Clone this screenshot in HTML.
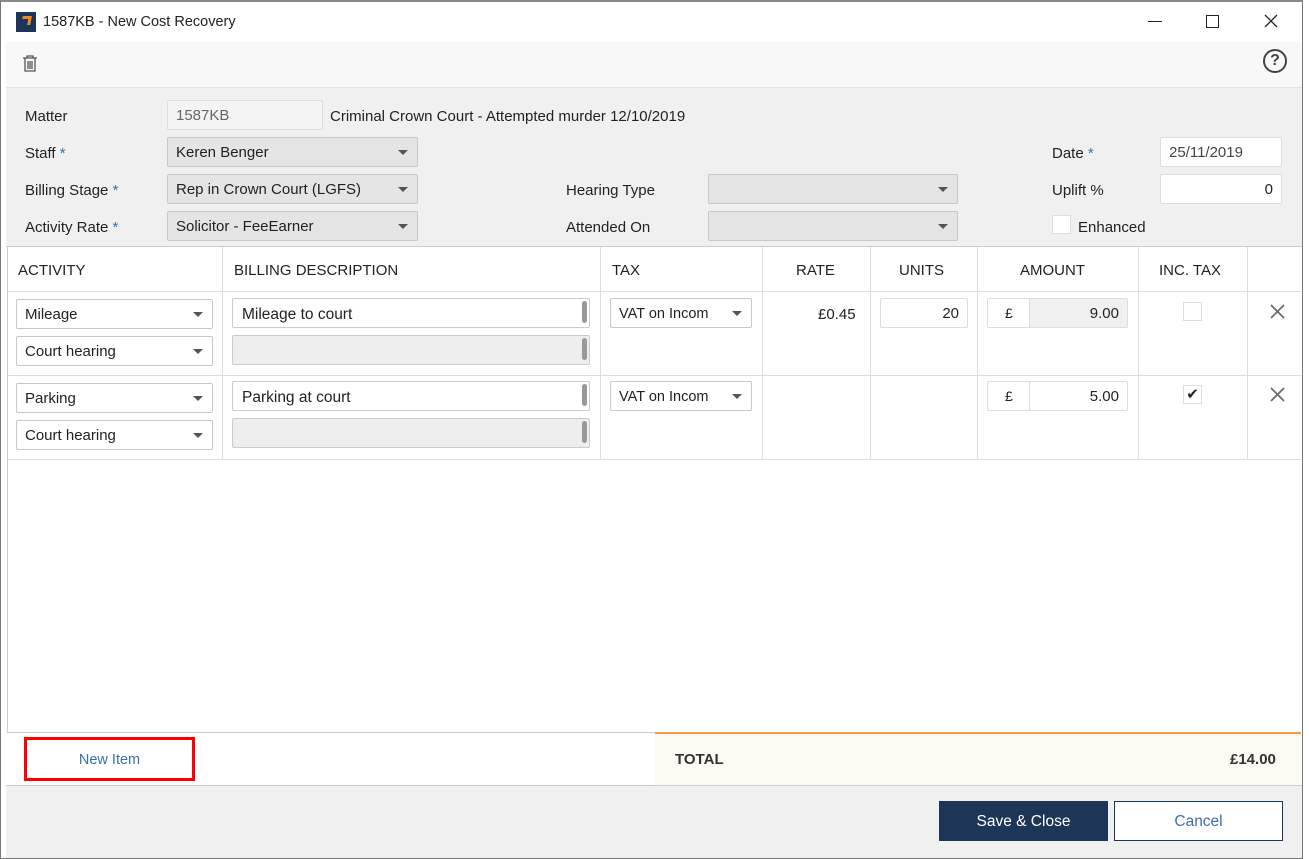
<!DOCTYPE html><html><head><style>
*{box-sizing:border-box;margin:0;padding:0}
body{width:1309px;height:859px;position:relative;background:#fff;font-family:"Liberation Sans",sans-serif;color:#222;overflow:hidden;font-size:15px}
.a{position:absolute}
.lbl{position:absolute;font-size:15px;color:#222}
.lbl b{color:#3a6fb0;font-weight:normal}
.sel{position:absolute;background:#e4e4e4;border:1px solid #c8c8c8;border-radius:2px;font-size:15px;padding:0 8px;line-height:30px;height:30px}
.sel:after{content:"";position:absolute;right:9px;top:12px;border:5px solid transparent;border-top:5px solid #555;border-bottom:0}
.wsel{background:#fff}
.inp{position:absolute;background:#fff;border:1px solid #ddd;border-radius:2px;height:30px;line-height:30px;font-size:15px;padding:0 8px}
.ta{position:absolute;border:1px solid #ccc;border-radius:2px;background:#fff;height:30px;line-height:32px;padding:0 9px;font-size:15.5px}
.ta:after{content:"";position:absolute;right:2px;top:2px;width:5px;height:22px;background:#999;border-radius:3px}
.vl{position:absolute;top:247px;height:212px;width:1px;background:#ddd}
.hd{position:absolute;top:262px;font-size:15px;color:#222}
</style></head><body>
<div class="a" style="left:0;top:0;width:1303px;height:859px;border:1px solid #777;border-top:2px solid #888;background:#fff"></div>
<div class="a" style="left:16px;top:12px;width:20px;height:20px;background:#1d3557"></div>
<div class="a" style="left:22px;top:16px;width:9px;height:9px;border-top:3px solid #f08a24;border-right:3px solid #f08a24;transform:skewX(-10deg)"></div>
<div class="a" style="left:43px;top:14px;font-size:14.5px">1587KB - New Cost Recovery</div>
<div class="a" style="left:1148px;top:21px;width:14px;height:1px;background:#222"></div>
<div class="a" style="left:1206px;top:15px;width:13px;height:13px;border:1.3px solid #222"></div>
<svg class="a" style="left:1264px;top:14px" width="14" height="14" viewBox="0 0 14 14" stroke="#222" stroke-width="1.3"><path d="M1 1L13 13M13 1L1 13"/></svg>
<div class="a" style="left:6px;top:42px;width:1296px;height:46px;background:#f8f8f8;border-bottom:1px solid #e2e2e2"></div>
<svg class="a" style="left:22px;top:54px" width="16" height="18" viewBox="0 0 16 18" fill="none" stroke="#555" stroke-width="1.3"><path d="M1 4h14M5 4V2h6v2M3 4v13h10V4M6 7v8M8 7v8M10 7v8"/></svg>
<div class="a" style="left:1263px;top:49px;width:24px;height:24px;border:2px solid #444;border-radius:50%;text-align:center;font-size:16px;line-height:20px;font-weight:bold;color:#444">?</div>
<div class="a" style="left:6px;top:88px;width:1296px;height:159px;background:#f0f0f0"></div>
<div class="lbl" style="left:25px;top:108px">Matter</div>
<div class="lbl" style="left:25px;top:145px">Staff <b>*</b></div>
<div class="lbl" style="left:25px;top:182px">Billing Stage <b>*</b></div>
<div class="lbl" style="left:25px;top:219px">Activity Rate <b>*</b></div>
<div class="inp" style="left:167px;top:100px;width:156px;background:#f4f4f4;color:#666;border-color:#ddd">1587KB</div>
<div class="lbl" style="left:330px;top:108px">Criminal Crown Court - Attempted murder 12/10/2019</div>
<div class="sel" style="left:167px;top:137px;width:251px">Keren Benger</div>
<div class="sel" style="left:167px;top:174px;width:251px">Rep in Crown Court (LGFS)</div>
<div class="sel" style="left:167px;top:211px;width:251px">Solicitor - FeeEarner</div>
<div class="lbl" style="left:566px;top:182px">Hearing Type</div>
<div class="lbl" style="left:566px;top:219px">Attended On</div>
<div class="sel" style="left:708px;top:174px;width:250px"></div>
<div class="sel" style="left:708px;top:211px;width:250px"></div>
<div class="lbl" style="left:1052px;top:145px">Date <b>*</b></div>
<div class="lbl" style="left:1052px;top:182px">Uplift %</div>
<div class="lbl" style="left:1078px;top:219px">Enhanced</div>
<div class="a" style="left:1052px;top:215px;width:19px;height:19px;background:#fff;border:1px solid #ddd"></div>
<div class="inp" style="left:1160px;top:137px;width:122px;color:#444">25/11/2019</div>
<div class="inp" style="left:1160px;top:174px;width:122px;text-align:right">0</div>
<div class="a" style="left:6px;top:246px;width:1296px;height:1px;background:#ccc"></div>
<div class="a" style="left:7px;top:291px;width:1294px;height:1px;background:#ddd"></div>
<div class="a" style="left:7px;top:375px;width:1294px;height:1px;background:#ddd"></div>
<div class="a" style="left:7px;top:459px;width:1294px;height:1px;background:#ddd"></div>
<div class="vl" style="left:222px"></div><div class="vl" style="left:600px"></div><div class="vl" style="left:762px"></div><div class="vl" style="left:870px"></div><div class="vl" style="left:977px"></div><div class="vl" style="left:1138px"></div><div class="vl" style="left:1247px"></div>
<div class="a" style="left:7px;top:247px;width:1px;height:486px;background:#ccc"></div>
<div class="hd" style="left:18px">ACTIVITY</div>
<div class="hd" style="left:234px">BILLING DESCRIPTION</div>
<div class="hd" style="left:612px">TAX</div>
<div class="hd" style="left:796px">RATE</div>
<div class="hd" style="left:899px">UNITS</div>
<div class="hd" style="left:1020px">AMOUNT</div>
<div class="hd" style="left:1159px">INC. TAX</div>
<div class="sel wsel" style="left:16px;top:299px;width:197px">Mileage</div>
<div class="sel wsel" style="left:16px;top:336px;width:197px">Court hearing</div>
<div class="sel wsel" style="left:16px;top:383px;width:197px">Parking</div>
<div class="sel wsel" style="left:16px;top:420px;width:197px">Court hearing</div>
<div class="ta" style="left:232px;top:298px;width:358px">Mileage to court</div>
<div class="ta" style="left:232px;top:335px;width:358px;background:#eee"></div>
<div class="ta" style="left:232px;top:381px;width:358px">Parking at court</div>
<div class="ta" style="left:232px;top:418px;width:358px;background:#eee"></div>
<div class="sel wsel" style="left:610px;top:298px;width:142px;font-size:14.5px">VAT on Incom</div>
<div class="sel wsel" style="left:610px;top:381px;width:142px;font-size:14.5px">VAT on Incom</div>
<div class="lbl" style="left:818px;top:306px">£0.45</div>
<div class="inp" style="left:880px;top:298px;width:88px;text-align:right">20</div>
<div class="inp" style="left:987px;top:298px;width:141px;background:#f0f0f0;text-align:right">9.00</div>
<div class="a" style="left:988px;top:299px;width:42px;height:28px;background:#fff;border-right:1px solid #ddd;padding:6px 0 0 17px;font-size:14px">£</div>
<div class="inp" style="left:987px;top:381px;width:141px;text-align:right">5.00</div>
<div class="a" style="left:988px;top:382px;width:42px;height:28px;background:#fff;border-right:1px solid #ddd;padding:6px 0 0 17px;font-size:14px">£</div>
<div class="a" style="left:1183px;top:302px;width:19px;height:19px;border:1px solid #ddd;background:#fff"></div>
<div class="a" style="left:1183px;top:385px;width:19px;height:19px;border:1px solid #ddd;background:#fff;font-size:15px;line-height:17px;text-align:center">✔</div>
<svg class="a" style="left:1270px;top:304px" width="15" height="15" viewBox="0 0 15 15" stroke="#666" stroke-width="1.6"><path d="M1 1L14 14M14 1L1 14"/></svg>
<svg class="a" style="left:1270px;top:387px" width="15" height="15" viewBox="0 0 15 15" stroke="#666" stroke-width="1.6"><path d="M1 1L14 14M14 1L1 14"/></svg>
<div class="a" style="left:7px;top:732px;width:1294px;height:1px;background:#ccc"></div>
<div class="a" style="left:655px;top:732px;width:646px;height:53px;background:#fcf8f2;border-top:2px solid #f29a46"></div>
<div class="a" style="left:675px;top:751px;font-weight:bold;font-size:15px;color:#333">TOTAL</div>
<div class="a" style="left:1230px;top:751px;font-weight:bold;font-size:15px;color:#333">£14.00</div>
<div class="a" style="left:24px;top:737px;width:171px;height:44px;border:3px solid #f00;text-align:center;line-height:40px;color:#3a6fb0;font-size:14.5px">New Item</div>
<div class="a" style="left:6px;top:785px;width:1296px;height:73px;background:#f0f0f0;border-top:1px solid #ccc"></div>
<div class="a" style="left:939px;top:801px;width:169px;height:40px;background:#1d3557;color:#fff;text-align:center;line-height:42px;font-size:15.5px">Save &amp; Close</div>
<div class="a" style="left:1114px;top:801px;width:169px;height:40px;background:#fff;border:1px solid #1d3557;color:#3a6fb0;text-align:center;line-height:40px;font-size:15.5px">Cancel</div>
</body></html>
